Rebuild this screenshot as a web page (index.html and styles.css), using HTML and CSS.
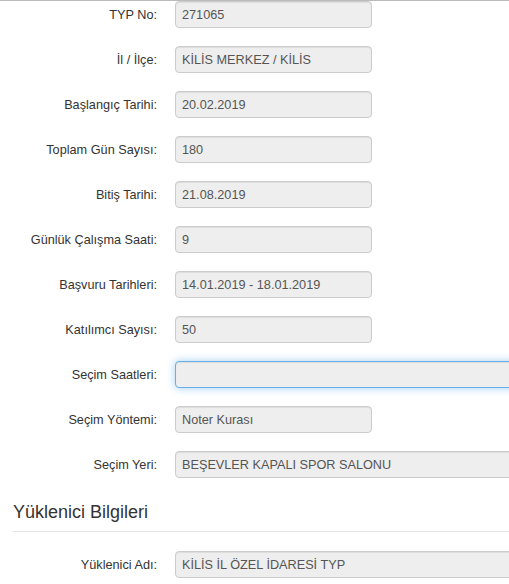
FILE: index.html
```html
<!DOCTYPE html>
<html lang="tr">
<head>
    <meta charset="UTF-8">
    <meta name="viewport" content="width=device-width, initial-scale=1.0">
    <title>TYP Detay</title>
    <link rel="stylesheet" href="styles.css">
</head>
<body>
    <div class="panel">
        <form class="form-horizontal">
            <div class="form-group">
                <label>TYP No:</label>
                <input type="text" class="form-control short" value="271065" readonly>
            </div>
            <div class="form-group">
                <label>İl / İlçe:</label>
                <input type="text" class="form-control short" value="KİLİS MERKEZ / KİLİS" readonly>
            </div>
            <div class="form-group">
                <label>Başlangıç Tarihi:</label>
                <input type="text" class="form-control short" value="20.02.2019" readonly>
            </div>
            <div class="form-group">
                <label>Toplam Gün Sayısı:</label>
                <input type="text" class="form-control short" value="180" readonly>
            </div>
            <div class="form-group">
                <label>Bitiş Tarihi:</label>
                <input type="text" class="form-control short" value="21.08.2019" readonly>
            </div>
            <div class="form-group">
                <label>Günlük Çalışma Saati:</label>
                <input type="text" class="form-control short" value="9" readonly>
            </div>
            <div class="form-group">
                <label>Başvuru Tarihleri:</label>
                <input type="text" class="form-control short" value="14.01.2019 - 18.01.2019" readonly>
            </div>
            <div class="form-group">
                <label>Katılımcı Sayısı:</label>
                <input type="text" class="form-control short" value="50" readonly>
            </div>
            <div class="form-group">
                <label>Seçim Saatleri:</label>
                <input type="text" class="form-control wide focused" value="" readonly>
            </div>
            <div class="form-group">
                <label>Seçim Yöntemi:</label>
                <input type="text" class="form-control short" value="Noter Kurası" readonly>
            </div>
            <div class="form-group">
                <label>Seçim Yeri:</label>
                <input type="text" class="form-control wide" value="BEŞEVLER KAPALI SPOR SALONU" readonly>
            </div>

            <h4 class="section-title">Yüklenici Bilgileri</h4>
            <hr>

            <div class="form-group">
                <label>Yüklenici Adı:</label>
                <input type="text" class="form-control wide" value="KİLİS İL ÖZEL İDARESİ TYP" readonly>
            </div>
        </form>
    </div>
</body>
</html>
```

FILE: styles.css
```css
body {
    font-family: "Liberation Sans", Arial, sans-serif;
    font-size: 12.7px;
    color: #333;
    margin: 0;
    padding: 0;
}
.panel {
    border-top: 1px solid #bbb;
    padding-left: 13px;
    overflow: hidden;
    height: 583px;
}
.form-group {
    display: grid;
    grid-template-columns: 144px 1fr;
    column-gap: 18px;
    align-items: center;
    margin-bottom: 18px;
}
.form-group label {
    text-align: right;
    font-weight: normal;
}
.form-control {
    box-sizing: border-box;
    height: 27px;
    padding: 0 6px;
    font-family: inherit;
    font-size: 12.7px;
    color: #555;
    background-color: #eee;
    border: 1px solid #ccc;
    border-radius: 4px;
    box-shadow: inset 0 1px 1px rgba(0, 0, 0, .075);
    outline: none;
}
.form-control.short {
    width: 197px;
}
.form-control.wide {
    width: 420px;
}
.form-control.focused {
    border-color: #66afe9;
    box-shadow: inset 0 1px 1px rgba(0, 0, 0, .075), 0 0 8px rgba(102, 175, 233, .6);
}
.section-title {
    font-size: 18px;
    font-weight: normal;
    line-height: 20px;
    margin: 24px 0 9px;
}
hr {
    border: none;
    border-top: 1px solid #e5e5e5;
    margin: 0 0 19px;
}
```
